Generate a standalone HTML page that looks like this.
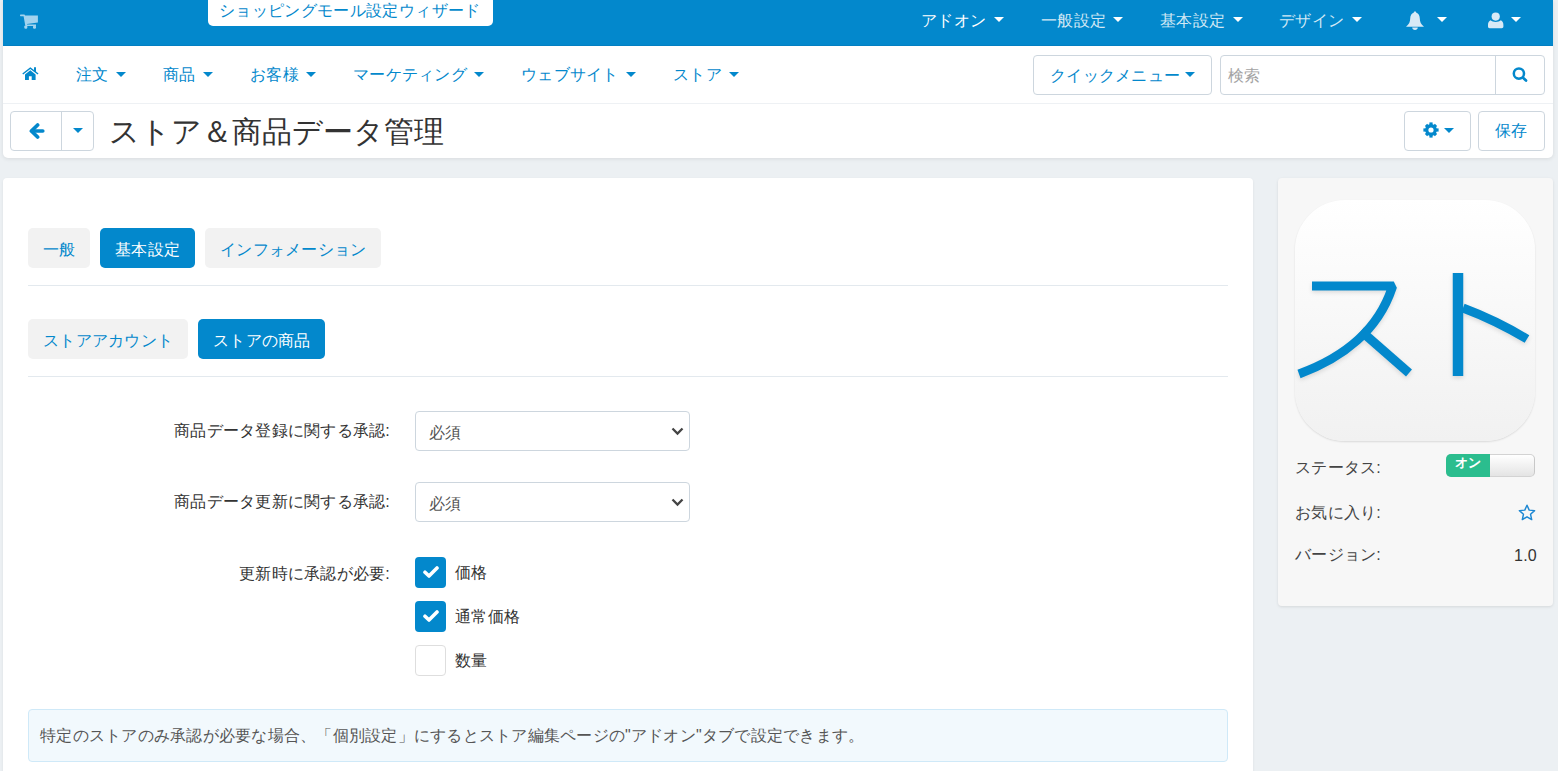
<!DOCTYPE html>
<html><head><meta charset="utf-8">
<style>
*{box-sizing:border-box;margin:0;padding:0}
html,body{width:1558px;height:771px;overflow:hidden}
body{background:#ecf0f3;letter-spacing:.25px;font-family:"Liberation Sans",sans-serif;font-size:16px;line-height:20px;color:#333;position:relative}
.a{position:absolute;white-space:nowrap}
.hdr{position:absolute;left:3px;top:0;width:1550px;height:158px;background:#fff;border-radius:0 0 5px 5px;box-shadow:0 1px 4px rgba(0,0,0,.09)}
.topbar{position:absolute;left:3px;top:0;width:1550px;height:46px;background:#0388cc;border-bottom:1px solid #037fc2}
.wiz{position:absolute;left:208px;top:0;width:285px;height:26px;background:#fff;border-radius:0 0 5px 5px}
.tw{color:#fff}
.tl{color:#d2e8f5}
.caretw{position:absolute;width:0;height:0;border-left:5px solid transparent;border-right:5px solid transparent;border-top:5px solid #fff}
.caretb{position:absolute;width:0;height:0;border-left:5px solid transparent;border-right:5px solid transparent;border-top:5px solid #0388cc}
.blue{color:#0388cc}
.sep{position:absolute;height:1px;background:#eef1f4}
.btn{position:absolute;border:1px solid #cdd6de;border-radius:4px;background:#fff}
.card{position:absolute;left:3px;top:178px;width:1250px;height:600px;background:#fff;border-radius:4px;box-shadow:0 1px 3px rgba(0,0,0,.07)}
.tab{position:absolute;height:40px;border-radius:5px;background:#f2f2f2;color:#0388cc}
.tab.act{background:#0388cc;color:#fff}
.tab span{position:absolute;left:15px;top:12px}
.hr{position:absolute;left:28px;width:1200px;height:1px;background:#e3e9ee}
.lbl{position:absolute;white-space:nowrap;text-align:right;color:#333}
.sel{position:absolute;left:415px;width:275px;height:40px;border:1px solid #cdd6de;border-radius:4px;background:#fff}
.cb{position:absolute;left:415px;width:31px;height:31px;border-radius:4px;background:#0388cc}
.cb.off{background:#fff;border:1px solid #dedede}
.side{position:absolute;left:1278px;top:178px;width:275px;height:428px;background:#f7f7f7;border-radius:4px;box-shadow:0 1px 3px rgba(0,0,0,.1)}
</style></head><body>

<div class="hdr"></div>
<div class="topbar"></div>
<!-- cart icon -->
<svg class="a" style="left:20px;top:14px" width="18" height="15" viewBox="0 0 18 15">
<path d="M0.6 0.6 H4.2 C4.6 0.6 4.9 0.9 5 1.3 L5.1 1.6 H17.9 V8.6 L6.9 10 L7.1 10.6 H16 V12 H6 C5.6 12 5.3 11.7 5.2 11.3 L3.6 2.2 H0.6 C0.2 2.2 0 1.9 0 1.4 C0 0.9 0.2 0.6 0.6 0.6 Z" fill="#a3d3ee"/>
<rect x="4.3" y="11.4" width="3" height="3.4" rx="1.2" fill="#a3d3ee"/>
<rect x="13" y="11.4" width="3" height="3.4" rx="1.2" fill="#a3d3ee"/>
</svg>
<div class="wiz"></div>
<div class="a blue" style="left:219px;top:1px;letter-spacing:.35px">ショッピングモール設定ウィザード</div>

<div class="a tw" style="left:921px;top:11px">アドオン</div><div class="caretw" style="left:994px;top:17px"></div>
<div class="a tl" style="left:1041px;top:11px">一般設定</div><div class="caretw" style="left:1113px;top:17px"></div>
<div class="a tl" style="left:1160px;top:11px">基本設定</div><div class="caretw" style="left:1233px;top:17px"></div>
<div class="a tl" style="left:1279px;top:11px">デザイン</div><div class="caretw" style="left:1352px;top:17px"></div>
<!-- bell -->
<svg class="a" style="left:1406px;top:11px" width="18" height="19" viewBox="0 0 18 19">
<path d="M9 0.4 C9.8 0.4 10.3 0.9 10.3 1.8 C12.6 2.4 13.7 4.6 13.8 7.6 C13.9 11 14.8 13.2 18 15.8 H0 C3.2 13.2 4.1 11 4.2 7.6 C4.3 4.6 5.4 2.4 7.7 1.8 C7.7 0.9 8.2 0.4 9 0.4 Z M6.2 16.5 H11.8 C11.8 18 10.6 18.9 9 18.9 C7.4 18.9 6.2 18 6.2 16.5 Z" fill="#d8eaf6"/>
</svg>
<div class="caretw" style="left:1437px;top:17px"></div>
<!-- user -->
<svg class="a" style="left:1488px;top:12px" width="17" height="17" viewBox="0 0 17 17">
<circle cx="7.7" cy="4.6" r="4.1" fill="#d8eaf6"/>
<path d="M2.6 8.2 C3.8 9.3 5.6 9.9 7.7 9.9 C9.8 9.9 11.6 9.3 12.8 8.2 C14.4 9 15.4 10.6 15.4 12.8 V14.6 C15.4 15.6 14.7 16.3 13.7 16.3 H1.7 C0.7 16.3 0 15.6 0 14.6 V12.8 C0 10.6 1 9 2.6 8.2 Z" fill="#d8eaf6"/>
</svg>
<div class="caretw" style="left:1511px;top:17px"></div>

<!-- nav row -->
<svg class="a" style="left:22px;top:67px" width="17" height="13" viewBox="0 0 17 13">
<path d="M0.3 6.4 L8.3 0.2 L12 3 V0.2 H14 V4.6 L16.5 6.4 L15.6 7.6 L8.3 1.9 L1.2 7.6 Z" fill="#0388cc"/>
<path d="M3 7.4 L8.3 3.2 L13.6 7.4 V13 H9.7 V9.2 H6.9 V13 H3 Z" fill="#0388cc"/>
</svg>
<div class="a blue" style="left:76px;top:65px">注文</div><div class="caretb" style="left:116px;top:72px"></div>
<div class="a blue" style="left:163px;top:65px">商品</div><div class="caretb" style="left:203px;top:72px"></div>
<div class="a blue" style="left:250px;top:65px">お客様</div><div class="caretb" style="left:306px;top:72px"></div>
<div class="a blue" style="left:353px;top:65px">マーケティング</div><div class="caretb" style="left:474px;top:72px"></div>
<div class="a blue" style="left:521px;top:65px">ウェブサイト</div><div class="caretb" style="left:626px;top:72px"></div>
<div class="a blue" style="left:673px;top:65px">ストア</div><div class="caretb" style="left:729px;top:72px"></div>

<div class="btn" style="left:1033px;top:55px;width:179px;height:40px"></div>
<div class="a blue" style="left:1050px;top:66px">クイックメニュー</div><div class="caretb" style="left:1185px;top:72px"></div>
<div class="btn" style="left:1220px;top:55px;width:325px;height:40px"></div>
<div class="a" style="left:1495px;top:55px;width:1px;height:40px;background:#cdd6de"></div>
<div class="a" style="left:1228px;top:66px;color:#a3a3a3">検索</div>
<svg class="a" style="left:1512px;top:67px" width="16" height="16" viewBox="0 0 16 16">
<circle cx="6.9" cy="6.6" r="5.1" fill="none" stroke="#0388cc" stroke-width="2.5"/>
<path d="M10.8 10.6 L14 13.6" stroke="#0388cc" stroke-width="2.7" stroke-linecap="round"/>
</svg>

<div class="sep" style="left:3px;top:103px;width:1550px"></div>

<!-- toolbar -->
<div class="btn" style="left:10px;top:111px;width:84px;height:40px"></div>
<div class="a" style="left:61px;top:111px;width:1px;height:40px;background:#cdd6de"></div>
<svg class="a" style="left:29px;top:123px" width="17" height="17" viewBox="0 0 17 17">
<path d="M8.6 2 L2.4 8 L8.6 14" fill="none" stroke="#0388cc" stroke-width="3.7" stroke-linecap="round" stroke-linejoin="round"/>
<path d="M3 8 H13.8" fill="none" stroke="#0388cc" stroke-width="3.6" stroke-linecap="round"/>
</svg>
<div class="caretb" style="left:73px;top:128px"></div>
<div class="a" style="left:109px;top:112px;font-size:30px;line-height:40px;color:#333;letter-spacing:0">ストア＆商品データ管理</div>

<div class="btn" style="left:1404px;top:111px;width:67px;height:40px"></div>
<svg class="a" style="left:1423px;top:122px" width="16" height="16" viewBox="0 0 16 16">
<g fill="#0388cc" transform="translate(8 8)">
<circle r="5.9"/>
<rect x="-1.6" y="-7.6" width="3.2" height="15.2"/>
<rect x="-1.6" y="-7.1" width="3.2" height="14.2" transform="rotate(45)"/>
<rect x="-1.6" y="-7.6" width="3.2" height="15.2" transform="rotate(90)"/>
<rect x="-1.6" y="-7.1" width="3.2" height="14.2" transform="rotate(135)"/>
</g>
<circle cx="8" cy="8" r="2.6" fill="#fff"/>
</svg>
<div class="caretb" style="left:1444px;top:128px"></div>
<div class="btn" style="left:1478px;top:111px;width:67px;height:40px"></div>
<div class="a blue" style="left:1495px;top:121px">保存</div>

<!-- content card -->
<div class="card"></div>
<div class="tab" style="left:28px;top:228px;width:62px"><span>一般</span></div>
<div class="tab act" style="left:100px;top:228px;width:95px"><span>基本設定</span></div>
<div class="tab" style="left:205px;top:228px;width:176px"><span>インフォメーション</span></div>
<div class="hr" style="top:285px"></div>
<div class="tab" style="left:28px;top:319px;width:160px"><span>ストアアカウント</span></div>
<div class="tab act" style="left:198px;top:319px;width:127px"><span>ストアの商品</span></div>
<div class="hr" style="top:376px"></div>

<div class="lbl" style="right:1168px;top:421px">商品データ登録に関する承認:</div>
<div class="sel" style="top:411px"><span class="a" style="left:13px;top:11px;color:#555">必須</span>
<svg class="a" style="left:255px;top:15.3px" width="13" height="9" viewBox="0 0 13 9"><path d="M1.5 1.5 L6.5 6.5 L11.5 1.5" fill="none" stroke="#444" stroke-width="2.3"/></svg></div>
<div class="lbl" style="right:1168px;top:492px">商品データ更新に関する承認:</div>
<div class="sel" style="top:482px"><span class="a" style="left:13px;top:11px;color:#555">必須</span>
<svg class="a" style="left:255px;top:15.3px" width="13" height="9" viewBox="0 0 13 9"><path d="M1.5 1.5 L6.5 6.5 L11.5 1.5" fill="none" stroke="#444" stroke-width="2.3"/></svg></div>

<div class="lbl" style="right:1168px;top:564px">更新時に承認が必要:</div>
<div class="cb" style="top:557px"><svg class="a" style="left:8px;top:9px" width="16" height="13" viewBox="0 0 16 13"><path d="M2 6.2 L6 10 L14 2" fill="none" stroke="#fff" stroke-width="3.6" stroke-linecap="round" stroke-linejoin="round"/></svg></div>
<div class="a" style="left:455px;top:563px">価格</div>
<div class="cb" style="top:601px"><svg class="a" style="left:8px;top:9px" width="16" height="13" viewBox="0 0 16 13"><path d="M2 6.2 L6 10 L14 2" fill="none" stroke="#fff" stroke-width="3.6" stroke-linecap="round" stroke-linejoin="round"/></svg></div>
<div class="a" style="left:455px;top:607px">通常価格</div>
<div class="cb off" style="top:645px"></div>
<div class="a" style="left:455px;top:651px">数量</div>

<div class="a" style="left:28px;top:709px;width:1200px;height:53px;background:#f2f9fd;border:1px solid #cfe9f8;border-radius:4px"></div>
<div class="a" style="left:40px;top:726px;color:#555">特定のストアのみ承認が必要な場合、「個別設定」にするとストア編集ページの"アドオン"タブで設定できます。</div>

<!-- sidebar -->
<div class="side"></div>
<div class="a" style="left:1295px;top:200px;width:240px;height:241px;border-radius:50px;background:linear-gradient(#ffffff,#f1f1f1);box-shadow:0 1px 2px rgba(0,0,0,.12)"></div>
<svg class="a" style="left:1295px;top:200px" width="240" height="241" viewBox="0 0 240 241" style="overflow:visible">
<g fill="none" stroke="#0388cc" stroke-width="9" style="filter:drop-shadow(0 2px 2px rgba(0,0,0,.12))">
<path d="M17 86 H96 L97 88 C83 130 48 158 4 174"/>
<path d="M66 131 L114 173"/>
<path d="M163 73 V176" stroke-width="10.5"/>
<path d="M168 108 C192 117 212 127 232 139"/>
</g>
</svg>
<div class="a" style="left:1295px;top:458px;color:#444">ステータス:</div>
<div class="a" style="left:1446px;top:453.5px;width:88.5px;height:23px;border:1px solid #d3d3d3;border-right-color:#c8c8c8;border-radius:5px;background:linear-gradient(#fff,#e4e4e4)"></div>
<div class="a" style="left:1446px;top:454px;width:44px;height:22.5px;background:#2bbd8e;border-radius:5px 0 0 5px"></div>
<div class="a" style="left:1455px;top:455px;font-size:13px;line-height:16px;color:#fff;font-weight:bold;letter-spacing:0">オン</div>
<div class="a" style="left:1295px;top:503px;color:#444">お気に入り:</div>
<svg class="a" style="left:1518px;top:503.5px" width="18" height="17" viewBox="0 0 18 17">
<path d="M9 1.2 L11.2 6.1 L16.6 6.6 L12.5 10.2 L13.7 15.6 L9 12.8 L4.3 15.6 L5.5 10.2 L1.4 6.6 L6.8 6.1 Z" fill="none" stroke="#1d87d2" stroke-width="1.45" stroke-linejoin="round"/>
</svg>
<div class="a" style="left:1295px;top:545px;color:#444">バージョン:</div>
<div class="a" style="left:1514px;top:546px;color:#333">1.0</div>

</body></html>
